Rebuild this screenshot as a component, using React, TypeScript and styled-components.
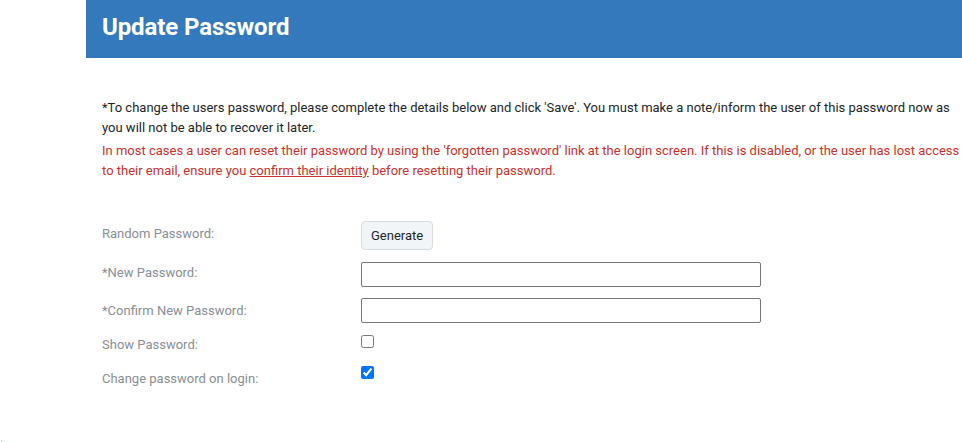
import React from "react";
import styled, { createGlobalStyle } from "styled-components";

const GlobalStyle = createGlobalStyle`
  html, body { margin: 0; padding: 0; background: #fff; }
  body { font-family: Roboto, "Noto Sans", Arial, sans-serif; color: #212529; }
  * { box-sizing: border-box; }
`;

const Page = styled.div`
  display: flex;
  flex-direction: column;
  width: 962px;
  height: 442px;
  overflow: hidden;
`;

const Main = styled.div`
  display: grid;
  grid-template-columns: 86px 1fr;
`;

const Sidebar = styled.div``;

const Content = styled.div`
  display: flex;
  flex-direction: column;
`;

const Header = styled.div`
  height: 58px;
  background: #3479bb;
  padding: 13px 16px 0;
`;

const Title = styled.h1`
  margin: 0;
  font-size: 24px;
  line-height: 28px;
  font-weight: 700;
  color: #fff;
  letter-spacing: -0.1px;
`;

const Body = styled.div`
  padding: 40px 0 0 16px;
`;

const Para = styled.p<{ $danger?: boolean; $gap?: number }>`
  margin: ${(p) => p.$gap ?? 0}px 0 0;
  font-size: 13px;
  line-height: 20px;
  color: ${(p) => (p.$danger ? "#c9302c" : "#212529")};
`;

const DangerLink = styled.a`
  color: inherit;
  text-decoration: underline;
`;

const Form = styled.div`
  display: flex;
  flex-direction: column;
  margin-top: 40px;
`;

const Row = styled.div<{ $top: number }>`
  display: flex;
  align-items: flex-start;
  margin-top: ${(p) => p.$top}px;
`;

const Label = styled.label<{ $pad: number }>`
  width: 259px;
  flex: none;
  padding-top: ${(p) => p.$pad}px;
  font-size: 13px;
  line-height: 20px;
  color: #878e96;
`;

const Button = styled.button`
  font-family: Roboto, "Noto Sans", Arial, sans-serif;
  font-size: 13px;
  line-height: 15px;
  color: #212529;
  background: #f2f5f8;
  border: 1px solid #d6dce2;
  border-radius: 4px;
  padding: 6px 9px;
  height: 29px;
  width: 72px;
  cursor: pointer;
`;

const TextInput = styled.input`
  width: 400px;
  height: 25px;
  margin: 0;
  border: 1px solid #767676;
  border-radius: 2px;
  padding: 1px 4px;
  font-size: 13px;
  background: #fff;
`;

const Check = styled.input<{ $top: number }>`
  width: 13px;
  height: 13px;
  margin: ${(p) => p.$top}px 0 0 0;
`;

const Footer = styled.div`
  margin-top: 42px;
  font-size: 13px;
  line-height: 15px;
`;

const FooterLink = styled.a`
  color: #0000ee;
  text-decoration: none;
`;

export default function App() {
  return (
    <>
      <GlobalStyle />
      <Page>
        <Main>
          <Sidebar />
          <Content>
            <Header>
              <Title>Update Password</Title>
            </Header>
            <Body>
              <Para>
                *To change the users password, please complete the details below and click 'Save'. You must make a
                note/inform the user of this password now as you will not be able to recover it later.
              </Para>
              <Para $danger $gap={3}>
                In most cases a user can reset their password by using the 'forgotten password' link at the login
                screen. If this is disabled, or the user has lost access to their email, ensure you{" "}
                <DangerLink href="#">confirm their identity</DangerLink> before resetting their password.
              </Para>
              <Form>
                <Row $top={0}>
                  <Label $pad={3}>Random Password:</Label>
                  <Button type="button">Generate</Button>
                </Row>
                <Row $top={12}>
                  <Label $pad={1}>*New Password:</Label>
                  <TextInput type="password" />
                </Row>
                <Row $top={11}>
                  <Label $pad={3}>*Confirm New Password:</Label>
                  <TextInput type="password" />
                </Row>
                <Row $top={12}>
                  <Label $pad={0}>Show Password:</Label>
                  <Check type="checkbox" $top={0} />
                </Row>
                <Row $top={11}>
                  <Label $pad={3}>Change password on login:</Label>
                  <Check type="checkbox" $top={0} defaultChecked />
                </Row>
              </Form>
            </Body>
          </Content>
        </Main>
        <Footer>
          <FooterLink href="#">.</FooterLink>
        </Footer>
      </Page>
    </>
  );
}
